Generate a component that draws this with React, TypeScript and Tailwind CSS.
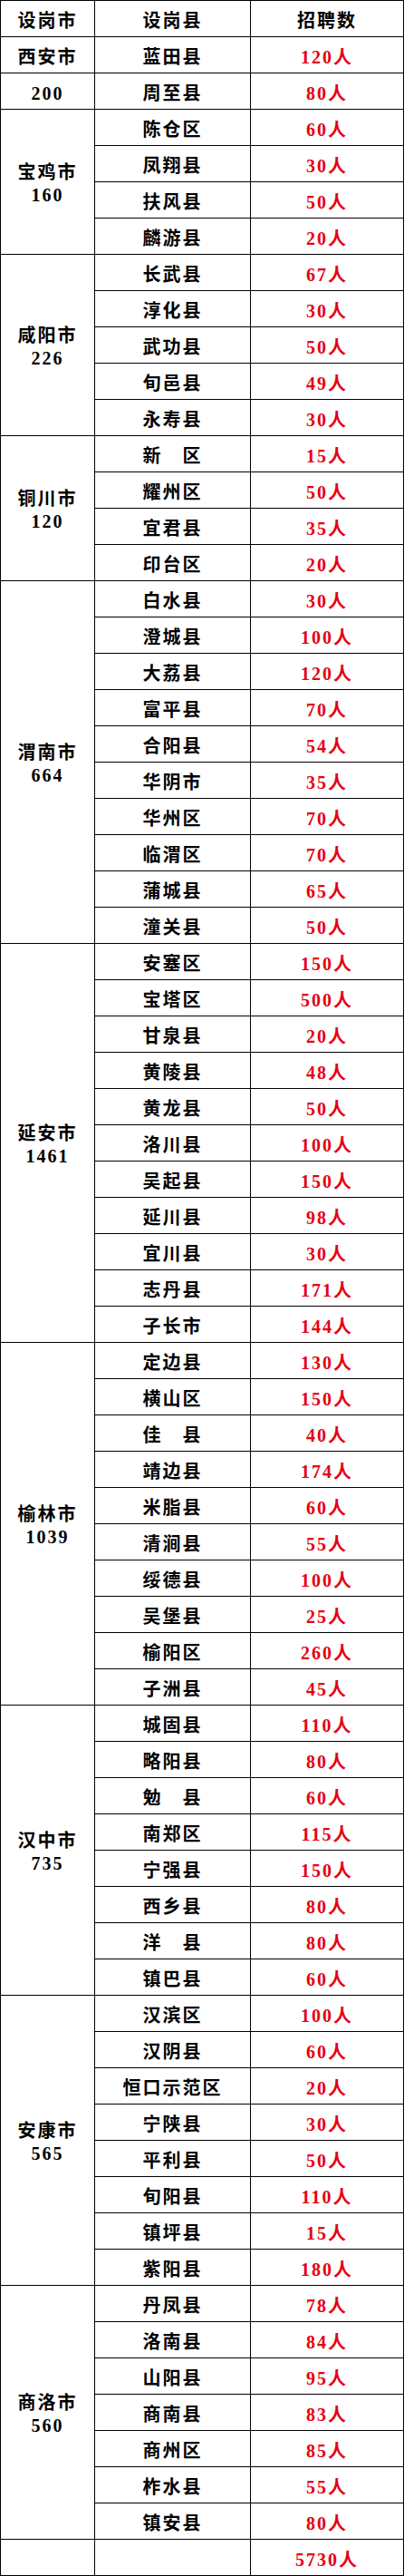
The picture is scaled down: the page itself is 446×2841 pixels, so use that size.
import React from "react";

type Group = {
  city: string;
  total?: string;
  rows: [string, string][];
};

const groups: Group[] = [
  { city: "西安市", rows: [["蓝田县", "120人"]] },
  { city: "200", rows: [["周至县", "80人"]] },
  {
    city: "宝鸡市",
    total: "160",
    rows: [
      ["陈仓区", "60人"],
      ["凤翔县", "30人"],
      ["扶风县", "50人"],
      ["麟游县", "20人"],
    ],
  },
  {
    city: "咸阳市",
    total: "226",
    rows: [
      ["长武县", "67人"],
      ["淳化县", "30人"],
      ["武功县", "50人"],
      ["旬邑县", "49人"],
      ["永寿县", "30人"],
    ],
  },
  {
    city: "铜川市",
    total: "120",
    rows: [
      ["新　区", "15人"],
      ["耀州区", "50人"],
      ["宜君县", "35人"],
      ["印台区", "20人"],
    ],
  },
  {
    city: "渭南市",
    total: "664",
    rows: [
      ["白水县", "30人"],
      ["澄城县", "100人"],
      ["大荔县", "120人"],
      ["富平县", "70人"],
      ["合阳县", "54人"],
      ["华阴市", "35人"],
      ["华州区", "70人"],
      ["临渭区", "70人"],
      ["蒲城县", "65人"],
      ["潼关县", "50人"],
    ],
  },
  {
    city: "延安市",
    total: "1461",
    rows: [
      ["安塞区", "150人"],
      ["宝塔区", "500人"],
      ["甘泉县", "20人"],
      ["黄陵县", "48人"],
      ["黄龙县", "50人"],
      ["洛川县", "100人"],
      ["吴起县", "150人"],
      ["延川县", "98人"],
      ["宜川县", "30人"],
      ["志丹县", "171人"],
      ["子长市", "144人"],
    ],
  },
  {
    city: "榆林市",
    total: "1039",
    rows: [
      ["定边县", "130人"],
      ["横山区", "150人"],
      ["佳　县", "40人"],
      ["靖边县", "174人"],
      ["米脂县", "60人"],
      ["清涧县", "55人"],
      ["绥德县", "100人"],
      ["吴堡县", "25人"],
      ["榆阳区", "260人"],
      ["子洲县", "45人"],
    ],
  },
  {
    city: "汉中市",
    total: "735",
    rows: [
      ["城固县", "110人"],
      ["略阳县", "80人"],
      ["勉　县", "60人"],
      ["南郑区", "115人"],
      ["宁强县", "150人"],
      ["西乡县", "80人"],
      ["洋　县", "80人"],
      ["镇巴县", "60人"],
    ],
  },
  {
    city: "安康市",
    total: "565",
    rows: [
      ["汉滨区", "100人"],
      ["汉阴县", "60人"],
      ["恒口示范区", "20人"],
      ["宁陕县", "30人"],
      ["平利县", "50人"],
      ["旬阳县", "110人"],
      ["镇坪县", "15人"],
      ["紫阳县", "180人"],
    ],
  },
  {
    city: "商洛市",
    total: "560",
    rows: [
      ["丹凤县", "78人"],
      ["洛南县", "84人"],
      ["山阳县", "95人"],
      ["商南县", "83人"],
      ["商州区", "85人"],
      ["柞水县", "55人"],
      ["镇安县", "80人"],
    ],
  },
];

const spans: Record<number, string> = {
  1: "row-span-1",
  4: "row-span-4",
  5: "row-span-5",
  7: "row-span-7",
  8: "row-span-8",
  10: "row-span-10",
  11: "row-span-11",
};

const cell =
  "border-r border-b border-black flex flex-col items-center justify-center pt-[5px] tracking-[2px]";

const App = () => {
  return (
    <div
      className="w-[446px] bg-white text-[20px] leading-[25px] font-semibold text-black"
      style={{ fontFamily: '"Liberation Serif", "Noto Sans CJK SC", serif' }}
    >
      <div className="grid grid-cols-[104px_172px_169px] auto-rows-[40px] border-t border-l border-black">
        {/* header */}
        <div className={cell}>设岗市</div>
        <div className={cell}>设岗县</div>
        <div className={cell}>招聘数</div>

        {groups.map((g) => (
          <React.Fragment key={g.city}>
            <div className={`${cell} ${spans[g.rows.length]}`}>
              <span>{g.city}</span>
              {g.total && <span>{g.total}</span>}
            </div>
            {g.rows.map(([county, num], i) => (
              <React.Fragment key={county}>
                <div className={`${cell} col-start-2`}>{county}</div>
                <div className={`${cell} text-[#e60012]`}>{num}</div>
              </React.Fragment>
            ))}
          </React.Fragment>
        ))}

        {/* total */}
        <div className={cell}></div>
        <div className={cell}></div>
        <div className={`${cell} text-[#e60012]`}>5730人</div>
      </div>
    </div>
  );
};

export default App;
